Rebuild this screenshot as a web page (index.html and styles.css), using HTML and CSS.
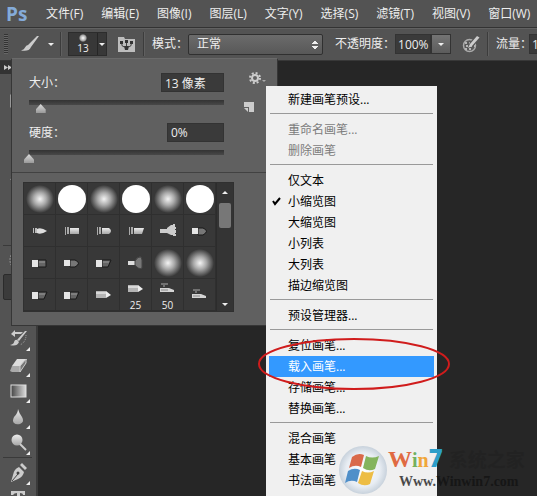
FILE: index.html
```html
<!DOCTYPE html>
<html lang="zh-CN">
<head>
    <meta charset="UTF-8">
    <meta name="viewport" content="width=device-width, initial-scale=1.0">
    <title>Ps</title>
    <link rel="stylesheet" href="styles.css">
</head>
<body>

    <!-- shared icons -->
    <svg class="defs" aria-hidden="true">
        <defs>
            <linearGradient id="metal" x1="0" y1="0" x2="0" y2="1">
                <stop offset="0" stop-color="#ececec"/><stop offset="1" stop-color="#a6a6a6"/>
            </linearGradient>
            <linearGradient id="fade"><stop offset="0" stop-color="#444"/><stop offset="1" stop-color="#ddd"/></linearGradient>
        </defs>
        <symbol id="round-tip" viewBox="0 0 32 32"><path fill="#bbb" d="M9 13h1v5H9zM11 13h2v5h-2z"/><path fill="#ddd" d="M13 14q4-2 10 2q-6 4-10 2z"/></symbol>
        <symbol id="flat-tip" viewBox="0 0 32 32"><path fill="#aaa" d="M9 12h1v8H9zM11 12h2v7h-2z"/><path fill="url(#metal)" d="M14 13h9v6h-9z"/></symbol>
        <symbol id="curve-tip" viewBox="0 0 32 32"><path fill="#aaa" d="M9 12h1v8H9zM11 12h2v7h-2z"/><path fill="url(#metal)" d="M14 13h7q4 3 0 6h-7z"/></symbol>
        <symbol id="angle-tip" viewBox="0 0 32 32"><path fill="#aaa" d="M9 12h1v8H9zM11 12h2v7h-2z"/><path fill="url(#metal)" d="M14 13h10l-2 6h-8z"/></symbol>
        <symbol id="fan-tip" viewBox="0 0 32 32"><path fill="#ccc" d="M8 14h8v4H8z"/><path fill="#ccc" d="M15 13l4-3h2v-1h2v3h1v2h-1v1h1v3h-1v1h1v2h-3v-1h-2l-4-2z"/></symbol>
        <symbol id="dark-round" viewBox="0 0 32 32"><path fill="#777" stroke="#181818" d="M14 13h5q7 3 0 7h-5z"/><path fill="#e5e5e5" d="M8 13h6v6H8z"/></symbol>
        <symbol id="dark-flat" viewBox="0 0 32 32"><path fill="#656565" stroke="#181818" d="M14 13h8v7h-8z"/><path stroke="#999" d="M15 15h6"/><path fill="#e5e5e5" d="M8 13h6v7H8z"/></symbol>
        <symbol id="dark-angle" viewBox="0 0 32 32"><path fill="#656565" stroke="#181818" d="M14 13h9l-3 7h-6z"/><path stroke="#999" d="M15 15h6"/><path fill="#e5e5e5" d="M8 13h6v7H8z"/></symbol>
        <symbol id="dark-fan" viewBox="0 0 32 32"><path fill="#ddd" d="M8 14h7v4H8z"/><path fill="#777" stroke="#444" d="M15 14q3-5 6-4l1 3v8q-3 2-7-3z"/></symbol>
        <symbol id="pencil" viewBox="0 0 32 32"><path fill="#b4b4b4" d="M8 12h10v7H8z"/><path fill="#d8d8d8" d="M8 13h10v2H8z"/><path fill="#eee" d="M18 12l5 4l-5 3z"/></symbol>
        <symbol id="airbrush" viewBox="0 0 32 32"><path fill="none" stroke="#aaa" d="M9 11h7M12 12v2"/><path fill="#d5d5d5" d="M8 15h9l5 2v2H8z"/><path stroke="#888" d="M9 17h7"/></symbol>
        <symbol id="marquee" viewBox="0 0 20 20"><rect x="2" y="4" width="16" height="12" fill="none" stroke="#ddd"/></symbol>
    </svg>

    <nav class="menubar">
        <div class="logo">Ps</div>
        <button>文件(F)</button>
        <button>编辑(E)</button>
        <button>图像(I)</button>
        <button>图层(L)</button>
        <button>文字(Y)</button>
        <button>选择(S)</button>
        <button>滤镜(T)</button>
        <button>视图(V)</button>
        <button>窗口(W)</button>
    </nav>

    <div class="options">
        <span class="grip"></span>
        <button class="tool-preset" aria-label="画笔工具">
            <svg width="20" height="18" viewBox="0 0 20 18"><path fill="#ccc" d="M19 1L11 12L8 10L17 1zM8 10l3 2Q9 17 1 15.500Q4.500 14.500 5 12.500Q6 10 8 10z"/></svg>
            <i class="arrow"></i>
        </button>
        <span class="divider"></span>
        <button class="brush-picker" aria-label="画笔预设">
            <span class="brush-size"><i class="dot"></i>13</span>
            <span class="drop"><i class="arrow"></i></span>
        </button>
        <button class="panel-btn" aria-label="切换画笔面板">
            <svg width="17" height="17" viewBox="0 0 17 17"><path fill="#bdbdbd" d="M0 1h6l1 2h10v13H0z"/><path fill="none" stroke="#444" d="M3.500 7q0 4 3 4M13.500 7q0 4-3 4M8.500 6v5"/><path fill="#333" d="M2 5h3v3H2zM7 4h3v3H7zM12 5h3v3h-3zM6 10h5l-1 4H7z"/></svg>
        </button>
        <span class="divider"></span>
        <label for="mode">模式：</label>
        <select class="mode" id="mode"><option>正常</option></select>
        <label class="opacity-label" for="opacity">不透明度：</label>
        <input class="value" id="opacity" type="text" value="100%">
        <button class="value-drop" aria-label="调整不透明度"><i class="arrow"></i></button>
        <button class="pressure" aria-label="压力控制">
            <svg width="18" height="18" viewBox="0 0 18 18"><circle cx="7.500" cy="10.500" r="6" fill="#5a5a5a" stroke="#aaa" stroke-width="1.500"/><path stroke="#b5b5b5" stroke-width="2" stroke-dasharray="2 2" d="M3 8h7M4 11h9M3 14h8"/><path stroke="#535353" stroke-width="5" d="M17 1L9 10"/><path fill="#ccc" d="M15 1l2.500 1.500L10 11l-4 2l2-4z"/></svg>
        </button>
        <span class="divider"></span>
        <label class="flow-label" for="flow">流量：</label>
        <input class="value" id="flow" type="text" value="100%">
    </div>

    <main class="workspace">
        <aside class="toolbar">
            <div class="toolbar-head">
                <svg width="8" height="5" viewBox="0 0 8 5"><path fill="#ccc" d="M0 0l4 2.500L0 5zM4 0l4 2.500L4 5z"/></svg>
            </div>
            <div class="tools">
                <button aria-label="选框"><svg width="20" height="20"><use href="#marquee"/></svg></button>
                <button aria-label="移动"></button>
                <button aria-label="套索"><svg width="20" height="20" viewBox="0 0 20 20"><circle cx="4" cy="11" r="2" fill="#ccc"/></svg></button>
                <button aria-label="快速选择"><svg width="20" height="20" viewBox="0 0 20 20"><circle cx="9" cy="10" r="7" fill="none" stroke="#ccc" stroke-dasharray="1 2"/></svg></button>
                <button aria-label="裁剪"><svg width="20" height="20" viewBox="0 0 20 20"><path fill="none" stroke="#ccc" stroke-width="2" d="M2 6h12v11"/></svg></button>
                <button aria-label="吸管"></button>
                <hr>
                <button aria-label="修复画笔"><svg width="20" height="20" viewBox="0 0 20 20"><ellipse cx="6" cy="9" rx="5" ry="8" fill="none" stroke="#ccc" stroke-dasharray="1 2"/></svg></button>
                <button class="active" aria-label="画笔"></button>
                <button aria-label="仿制图章"><svg width="20" height="20" viewBox="0 0 20 20"><path fill="#bbb" d="M2 14h16v3H2z"/></svg></button>
                <button class="more" aria-label="历史记录画笔"><svg width="20" height="20" viewBox="0 0 20 20"><path fill="#ccc" d="M18 2L10 12l-2-1L16 2zM8 11l2 2q-2 5-9 3q4-1 4-3q1-3 3-2zM2 5l4-4v2h8L12 5H6v3z"/><path fill="none" stroke="#aaa" stroke-dasharray="1 1" d="M17 6q0 7-6 10"/></svg></button>
                <button class="more" aria-label="橡皮擦"><svg width="20" height="20" viewBox="0 0 20 20"><path fill="#ddd" d="M8 4h10l-5 7H3z"/><path fill="#aaa" d="M3 11h8v6H3l-2-1z"/><path fill="#777" stroke="#ccc" d="M11 11l6-7v4l-6 9z"/></svg></button>
                <button class="more" aria-label="渐变"><svg width="20" height="20" viewBox="0 0 20 20"><rect x="2" y="4" width="15" height="12" fill="url(#fade)" stroke="#ddd"/></svg></button>
                <button class="more" aria-label="模糊"><svg width="20" height="20" viewBox="0 0 20 20"><path fill="url(#metal)" d="M9 2q1 4 4 8q3 5-2 7q-4 1-6-1q-2-2 0-6q4-4 4-8z"/></svg></button>
                <button class="more" aria-label="减淡"><svg width="20" height="20" viewBox="0 0 20 20"><circle cx="8" cy="7" r="5.500" fill="url(#metal)"/><path stroke="#ccc" stroke-width="2" d="M11 11l6 6"/></svg></button>
                <hr>
                <button class="more" aria-label="钢笔"><svg width="20" height="20" viewBox="0 0 20 20"><path fill="#ccc" d="M11 2l2-2l5 5l-2 2zM10 4l5 5q-1 5-6 7l-7 3l2-7q1-6 6-8z"/><path stroke="#444" d="M3 18l6-7"/><circle cx="9" cy="10" r="1.500" fill="#444"/></svg></button>
                <button aria-label="文字"><svg width="20" height="20" viewBox="0 0 20 20"><path fill="#ccc" d="M2 2h14v4h-2q0-2-3-2v13h2v1H6v-1h2V4Q5 4 4 6H2z"/></svg></button>
            </div>
        </aside>

        <section class="popup">
            <div class="settings">
                <div class="field">
                    <label for="size">大小：</label>
                    <input class="value size-value" type="text" value="13 像素" aria-label="大小数值">
                </div>
                <input class="slider" id="size" type="range" min="0" max="100" value="6">
                <div class="field second">
                    <label for="hardness">硬度：</label>
                    <input class="value hardness-value" type="text" value="0%" aria-label="硬度数值">
                </div>
                <input class="slider" id="hardness" type="range" min="0" max="100" value="0">
                <div class="side">
                    <button aria-label="画笔菜单"><svg width="18" height="14" viewBox="0 0 18 14"><circle cx="7" cy="7" r="3" fill="none" stroke="#ccc" stroke-width="2"/><circle cx="7" cy="7" r="5" fill="none" stroke="#ccc" stroke-width="2" stroke-dasharray="2 1.930"/><path fill="#aaa" d="M14 9h4l-2 2z"/></svg></button>
                    <button class="new-preset" aria-label="新建预设"><svg width="12" height="12" viewBox="0 0 12 12"><path fill="#ccc" d="M1 1h10v10H6V6H1z"/><path fill="#ccc" d="M1 7h4v4z"/></svg></button>
                </div>
            </div>
            <div class="library">
                <div class="brushes">
                    <button aria-label="柔边圆"><i class="soft"></i></button>
                    <button aria-label="硬边圆"><i class="hard"></i></button>
                    <button aria-label="柔边圆"><i class="soft"></i></button>
                    <button aria-label="硬边圆"><i class="hard"></i></button>
                    <button aria-label="柔边圆"><i class="soft"></i></button>
                    <button aria-label="硬边圆"><i class="hard"></i></button>

                    <button aria-label="圆点"><svg><use href="#round-tip"/></svg></button>
                    <button aria-label="平点"><svg><use href="#flat-tip"/></svg></button>
                    <button aria-label="圆曲线"><svg><use href="#curve-tip"/></svg></button>
                    <button aria-label="平角"><svg><use href="#angle-tip"/></svg></button>
                    <button aria-label="扇形"><svg><use href="#fan-tip"/></svg></button>
                    <button aria-label="圆点硬"><svg><use href="#dark-round"/></svg></button>

                    <button aria-label="平点硬"><svg><use href="#dark-flat"/></svg></button>
                    <button aria-label="圆曲线硬"><svg><use href="#dark-round"/></svg></button>
                    <button aria-label="平角硬"><svg><use href="#dark-angle"/></svg></button>
                    <button aria-label="扇形硬"><svg><use href="#dark-fan"/></svg></button>
                    <button aria-label="柔边圆"><i class="soft"></i></button>
                    <button aria-label="柔边圆"><i class="soft"></i></button>

                    <button aria-label="平角低"><svg><use href="#dark-angle"/></svg></button>
                    <button aria-label="平角高"><svg><use href="#dark-angle"/></svg></button>
                    <button aria-label="铅笔"><svg><use href="#pencil"/></svg></button>
                    <button class="sized"><svg viewBox="0 6 32 20"><use href="#pencil" width="32" height="32"/></svg>25</button>
                    <button class="sized"><svg viewBox="0 6 32 20"><use href="#airbrush" width="32" height="32"/></svg>50</button>
                    <button aria-label="喷枪"><svg><use href="#airbrush"/></svg></button>
                </div>
                <div class="scrollbar">
                    <i class="arrow up"></i>
                    <span class="thumb"></span>
                    <i class="arrow"></i>
                </div>
            </div>
        </section>
    </main>

    <div class="context-menu" role="menu">
        <button role="menuitem">新建画笔预设...</button>
        <hr>
        <button role="menuitem" disabled>重命名画笔...</button>
        <button role="menuitem" disabled>删除画笔</button>
        <hr>
        <button role="menuitem">仅文本</button>
        <button role="menuitem" class="checked"><svg width="9" height="9" viewBox="0 0 9 9"><path fill="none" stroke="#000" stroke-width="2" d="M1 4l2 3l5-6"/></svg>小缩览图</button>
        <button role="menuitem">大缩览图</button>
        <button role="menuitem">小列表</button>
        <button role="menuitem">大列表</button>
        <button role="menuitem">描边缩览图</button>
        <hr>
        <button role="menuitem">预设管理器...</button>
        <hr>
        <button role="menuitem">复位画笔...</button>
        <button role="menuitem" class="selected">载入画笔...</button>
        <button role="menuitem">存储画笔...</button>
        <button role="menuitem">替换画笔...</button>
        <hr>
        <button role="menuitem">混合画笔</button>
        <button role="menuitem">基本画笔</button>
        <button role="menuitem">书法画笔</button>
    </div>

    <svg class="marker" width="194" height="54" viewBox="0 0 194 54"><ellipse cx="97" cy="27" rx="95" ry="25" fill="none" stroke="#d01c1c" stroke-width="2"/></svg>

    <div class="watermark">
        <svg width="50" height="50" viewBox="0 0 50 50">
            <defs><radialGradient id="ball"><stop offset="0" stop-color="#fff"/><stop offset=".7" stop-color="#e8edf3"/><stop offset="1" stop-color="#c8d2dc"/></radialGradient></defs>
            <circle cx="25" cy="25" r="24" fill="url(#ball)"/>
            <path fill="#d9694a" d="M14 12q6-5 12-2l-3 12q-6-3-12 1z"/>
            <path fill="#83b45d" d="M28 11q6 3 13 0l-4 13q-6 3-12-1z"/>
            <path fill="#4f8fc9" d="M10 26q6-4 12-1l-3 12q-6-3-12 1z"/>
            <path fill="#edbd45" d="M24 26q6 3 12 0l-4 13q-6 3-12-1z"/>
        </svg>
        <div class="site">
            <div class="site-name"><span class="w">W</span><span class="i">i</span><span class="n">n</span><span class="seven">7</span><span class="cn">系统之家</span></div>
            <div class="site-url">Www.Winwin7.com</div>
        </div>
    </div>

</body>
</html>
```
FILE: styles.css
```css
* {
    box-sizing: border-box;
}

body {
    margin: 0;
    height: 100vh;
    display: flex;
    flex-direction: column;
    overflow: hidden;
    position: relative;
    background: #262626;
    color: #eee;
    font-family: "Open Sans", "Noto Sans CJK SC", sans-serif;
    font-size: 12px;
    line-height: 16px;
}

button, input, select {
    font: inherit;
    color: inherit;
    margin: 0;
    padding: 0;
    border: none;
    background: none;
}

button {
    flex-shrink: 0;
}

svg {
    display: block;
}

.defs {
    position: absolute;
    width: 0;
    height: 0;
}

.arrow {
    display: block;
    border: 3px solid transparent;
    border-top-color: #eee;
    border-bottom: 0;
}

.arrow.up {
    border-top: 0;
    border-bottom: 3px solid #eee;
}

/* menu bar */
.menubar {
    display: flex;
    align-items: center;
    gap: 18px;
    height: 27px;
    flex-shrink: 0;
    padding-left: 6px;
    background: #535353;
    white-space: nowrap;
}

.logo {
    width: 22px;
    color: #84abd9;
    font-size: 19px;
    font-weight: bold;
}

/* options bar */
.options {
    display: flex;
    align-items: center;
    height: 34px;
    flex-shrink: 0;
    padding-left: 4px;
    background: #535353;
    border-top: 1px solid #333;
    border-bottom: 1px solid #383838;
    box-shadow: inset 0 1px #626262;
    white-space: nowrap;
    overflow: hidden;
}

.options > * {
    flex-shrink: 0;
}

.grip {
    width: 4px;
    height: 20px;
    background: repeating-linear-gradient(#333 0 1px, #666 1px 2px);
}

.tool-preset {
    display: flex;
    align-items: center;
    gap: 8px;
    margin: 0 6px 0 12px;
}

.divider {
    width: 2px;
    height: 24px;
    background: #3c3c3c;
    border-right: 1px solid #606060;
}

.brush-picker {
    display: flex;
    width: 39px;
    height: 24px;
    margin: 0 11px 0 6px;
    background: #383838;
    border: 1px solid #2c2c2c;
}

.brush-size {
    display: flex;
    flex-direction: column;
    align-items: center;
    width: 28px;
    font-size: 10px;
    line-height: 12px;
}

.dot {
    width: 8px;
    height: 8px;
    margin-top: 1px;
    border-radius: 50%;
    background: radial-gradient(#fff, #aaa 50%, transparent 75%);
}

.drop {
    display: flex;
    align-items: center;
    justify-content: center;
    flex: 1;
    border-left: 1px solid #262626;
}

.panel-btn {
    margin-right: 8px;
}

.divider + label {
    margin-left: 7px;
}

/* the two small arrows are drawn with four corner gradients */
.mode {
    appearance: none;
    width: 135px;
    height: 21px;
    padding-left: 8px;
    border: 1px solid #303030;
    border-radius: 2px;
    background:
        linear-gradient(to bottom right, #eee 50%, transparent 50%) right 4px top 11px / 3px 4px no-repeat,
        linear-gradient(to bottom left, #eee 50%, transparent 50%) right 7px top 11px / 3px 4px no-repeat,
        linear-gradient(to top right, #eee 50%, transparent 50%) right 4px top 5px / 3px 4px no-repeat,
        linear-gradient(to top left, #eee 50%, transparent 50%) right 7px top 5px / 3px 4px no-repeat,
        linear-gradient(#6b6b6b, #585858);
}

.opacity-label {
    margin-left: 12px;
}

.flow-label {
    margin-right: -3px;
}

.value {
    background: #3a3a3a;
    border: 1px solid #333;
    height: 19px;
    padding-left: 3px;
}

.options .value {
    width: 36px;
    height: 20px;
    padding-left: 2px;
}

.value-drop {
    display: flex;
    align-items: center;
    justify-content: center;
    width: 20px;
    height: 20px;
    border: 1px solid #333;
    background: linear-gradient(#747474, #5c5c5c);
}

.pressure {
    margin: 0 7px 0 11px;
}

/* toolbar */
.workspace {
    display: flex;
    flex: 1;
    min-height: 0;
    position: relative;
}

.toolbar {
    width: 38px;
    background: #535353;
    border-right: 2px solid #3a3a3a;
    overflow: hidden;
}

.toolbar-head {
    height: 13px;
    padding: 4px;
    background: #333;
}

.tools {
    display: flex;
    flex-direction: column;
    padding: 14px 4px 0 3px;
}

.tools button {
    height: 26px;
    padding-left: 6px;
    position: relative;
}

.tools hr {
    width: 100%;
    margin: 1px 0 2px;
    border: none;
    border-top: 1px solid #3a3a3a;
}

.tools .active {
    background: #3b3b3b;
    border: 1px solid #2b2b2b;
    border-radius: 2px;
}

.more::after {
    content: "";
    position: absolute;
    right: 2px;
    bottom: 1px;
    border: 2px solid transparent;
    border-right-color: #eee;
    border-bottom-color: #eee;
}

/* brush popup */
.popup {
    position: absolute;
    left: 11px;
    top: -3px;
    width: 267px;
    background: #606060;
    border: 1px solid #363636;
    border-top-color: #6a6a6a;
}

.settings {
    position: relative;
    padding: 14px 0 8px 12px;
    border-bottom: 1px solid #424242;
}

.field {
    display: flex;
    align-items: center;
    justify-content: space-between;
    width: 200px;
    padding-left: 5px;
}

.field.second {
    margin-top: 9px;
}

.size-value {
    width: 63px;
}

.hardness-value {
    width: 57px;
}

.slider {
    appearance: none;
    display: block;
    width: 205px;
    height: 14px;
    margin-top: 8px;
    background: linear-gradient(#333, #484848) 5px 0 / 195px 5px no-repeat;
}

.slider::-webkit-slider-thumb {
    appearance: none;
    width: 10px;
    height: 9px;
    margin-top: 3px;
    background: linear-gradient(#ddd, #999);
    clip-path: polygon(50% 0, 100% 60%, 100% 100%, 0 100%, 0 60%);
}

.side {
    position: absolute;
    top: 12px;
    right: 0;
    display: flex;
    flex-direction: column;
    align-items: flex-start;
    gap: 16px;
    width: 30px;
}

.side .new-preset {
    margin-left: -4px;
}

.side button:first-child {
    padding-left: 1px;
}

.library {
    display: flex;
    width: 211px;
    margin: 9px 11px 13px;
    border: 1px solid #303030;
    background: #383838;
}

.brushes {
    display: grid;
    grid-template-columns: repeat(6, 32px);
    grid-auto-rows: 32px;
}

.brushes button {
    display: flex;
    flex-direction: column;
    align-items: center;
    justify-content: center;
    border-right: 1px solid #2f2f2f;
    border-bottom: 1px solid #2f2f2f;
    overflow: hidden;
}

.brushes svg {
    width: 32px;
    height: 32px;
    flex-shrink: 0;
}

.brushes .sized {
    justify-content: space-between;
    font-size: 10px;
    line-height: 12px;
}

.brushes .sized svg {
    height: 20px;
}

.soft, .hard {
    width: 28px;
    height: 28px;
    border-radius: 50%;
    background: #fff;
}

.soft {
    background: radial-gradient(closest-side, #f4f4f4, #aaa 45%, #666 78%, #383838);
}

.scrollbar {
    display: flex;
    flex-direction: column;
    align-items: center;
    flex: 1;
    padding: 8px 0 5px;
    background: #343434;
    border-left: 1px solid #2c2c2c;
}

.thumb {
    width: 12px;
    height: 25px;
    margin: 9px 0 auto;
    border-radius: 2px;
    background: #777;
}

/* drop-down menu of the popup */
.context-menu {
    position: absolute;
    left: 266px;
    top: 86px;
    bottom: 0;
    width: 171px;
    padding: 3px;
    background: #f0f0f0;
    color: #000;
}

.context-menu button {
    display: block;
    position: relative;
    width: 100%;
    height: 21px;
    padding-left: 19px;
    text-align: left;
}

.context-menu button:disabled {
    color: #7c7c7c;
}

.context-menu .selected {
    background: #3399ff;
    color: #fff;
}

.context-menu hr {
    margin: 3px 1px 5px;
    border: none;
    border-top: 1px solid #999;
}

.checked svg {
    position: absolute;
    left: 3px;
    top: 6px;
}

.marker {
    position: absolute;
    left: 257px;
    top: 337px;
}

.watermark {
    position: absolute;
    left: 338px;
    top: 445px;
    display: flex;
    white-space: nowrap;
    font-family: "Liberation Serif", serif;
    font-weight: bold;
}

.site-name {
    display: flex;
    align-items: baseline;
    height: 28px;
    line-height: 26px;
    font-size: 20px;
}

.w {
    font-size: 24px;
    color: #e06a42;
}

.i {
    color: #72b060;
}

.n {
    color: #f0a63a;
}

.seven {
    font-family: "Open Sans", sans-serif;
    font-size: 24px;
    font-weight: 800;
    color: #2d9ec9;
}

.cn {
    margin-left: 6px;
    font-family: "Noto Sans CJK SC", sans-serif;
    font-size: 19px;
    color: #222;
}

.site-url {
    padding-left: 11px;
    font-size: 14px;
    line-height: 18px;
    color: #111;
    opacity: .75;
}
```
